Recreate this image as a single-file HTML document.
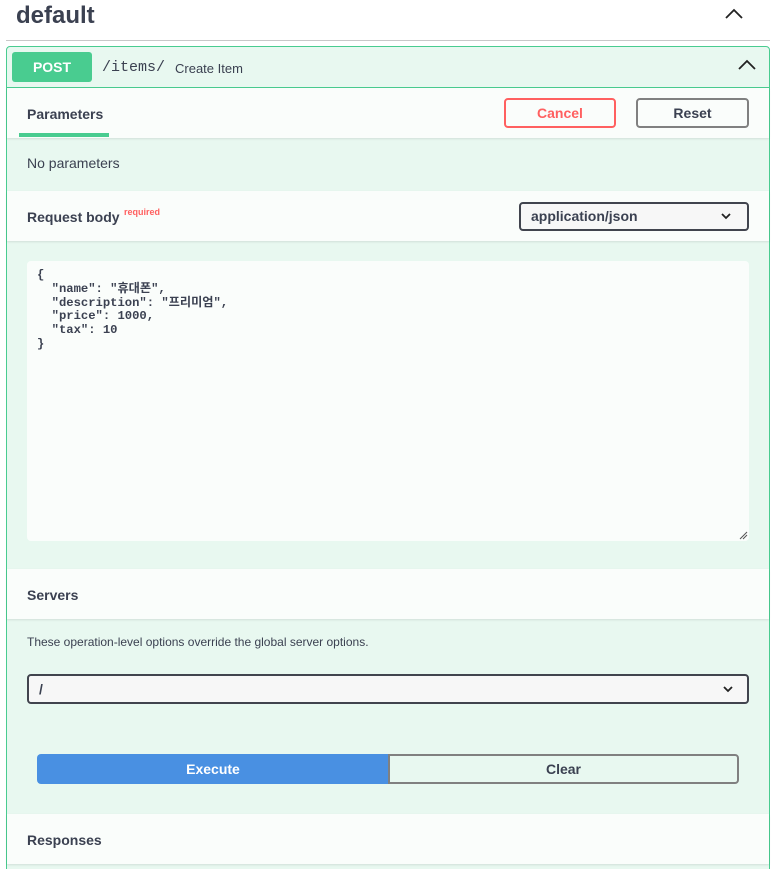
<!DOCTYPE html>
<html style="width:782px;height:869px;overflow:hidden"><head><meta charset="utf-8"><style>
*{box-sizing:border-box;margin:0;padding:0}
body{width:782px;height:869px;background:#fff;font-family:"Liberation Sans","Noto Sans CJK KR",sans-serif;color:#3b4151;position:relative;overflow:hidden}
.a{position:absolute}
.t{font-size:14px;font-weight:bold;color:#3b4151}
</style></head><body>
<div class="a" style="left:16px;top:2px;font-size:24px;font-weight:bold;color:#3b4151">default</div>
<svg class="a" style="left:724px;top:7px" width="20" height="14"><path d="M2 11 L10 3 L18 11" fill="none" stroke="#222" stroke-width="1.8"/></svg>
<div class="a" style="left:6px;top:40px;width:764px;height:1px;background:#c8c8c8"></div>

<div class="a" style="left:6px;top:46px;width:764px;height:840px;border:1px solid #49cc90;border-radius:4px;background:#e8f8f0"></div>
<div class="a" style="left:7px;top:87px;width:762px;height:1px;background:#49cc90"></div>
<div class="a" style="left:12px;top:52px;width:80px;height:30px;background:#49cc90;border-radius:3px;color:#fff;font-weight:bold;font-size:14px;text-align:center;line-height:30px">POST</div>
<div class="a" style="left:102px;top:59px;font-family:'Liberation Mono',monospace;font-size:15px;color:#3b4151">/items/</div>
<div class="a" style="left:175px;top:61px;font-size:13px;color:#3b4151">Create Item</div>
<svg class="a" style="left:737px;top:58px" width="20" height="14"><path d="M2 11 L10 3 L18 11" fill="none" stroke="#222" stroke-width="1.8"/></svg>

<div class="a" style="left:7px;top:88px;width:762px;height:50px;background:#fafdfb;box-shadow:0 1px 2px rgba(0,0,0,.1)"></div>
<div class="a t" style="left:27px;top:106px">Parameters</div>
<div class="a" style="left:19px;top:133px;width:90px;height:4px;background:#49cc90"></div>
<div class="a" style="left:504px;top:98px;width:112px;height:30px;border:2px solid #ff6060;border-radius:4px;color:#ff6060;font-size:14px;font-weight:bold;text-align:center;line-height:26px">Cancel</div>
<div class="a" style="left:636px;top:98px;width:113px;height:30px;border:2px solid #808080;border-radius:4px;color:#3b4151;font-size:14px;font-weight:bold;text-align:center;line-height:26px">Reset</div>
<div class="a" style="left:27px;top:155px;font-size:14px">No parameters</div>

<div class="a" style="left:7px;top:191px;width:762px;height:50px;background:#fafdfb;box-shadow:0 1px 2px rgba(0,0,0,.1)"></div>
<div class="a t" style="left:27px;top:209px">Request body</div>
<div class="a" style="left:124px;top:207px;font-size:9px;color:#ff6060;font-weight:bold">required</div>
<div class="a" style="left:519px;top:202px;width:230px;height:29px;border:2px solid #41444e;border-radius:4px;background:#f7f7f7;font-size:14px;font-weight:bold;padding-left:10px;line-height:25px">application/json</div>
<svg class="a" style="left:720px;top:212px" width="12" height="8"><path d="M2 2 L6 6 L10 2" fill="none" stroke="#222" stroke-width="1.8"/></svg>

<div class="a" style="left:27px;top:261px;width:722px;height:280px;background:#fafdfb;border-radius:4px"></div>
<pre class="a" style="left:37px;top:269px;font-family:'Liberation Mono','Noto Sans CJK KR',monospace;font-size:12.2px;line-height:13.8px;font-weight:bold;color:#3b4151">{
  "name": "휴대폰",
  "description": "프리미엄",
  "price": 1000,
  "tax": 10
}</pre>
<svg class="a" style="left:739px;top:531px" width="9" height="9"><path d="M1 8 L8 1 M4 8 L8 4" stroke="#555" stroke-width="1"/></svg>

<div class="a" style="left:7px;top:569px;width:762px;height:50px;background:#fafdfb;box-shadow:0 1px 2px rgba(0,0,0,.1)"></div>
<div class="a t" style="left:27px;top:587px">Servers</div>
<div class="a" style="left:27px;top:635px;font-size:12px">These operation-level options override the global server options.</div>
<div class="a" style="left:27px;top:674px;width:722px;height:30px;border:2px solid #41444e;border-radius:4px;background:#f7f7f7;font-size:14px;font-weight:bold;padding-left:10px;line-height:26px">/</div>
<svg class="a" style="left:722px;top:685px" width="12" height="8"><path d="M2 2 L6 6 L10 2" fill="none" stroke="#222" stroke-width="1.8"/></svg>

<div class="a" style="left:37px;top:754px;width:352px;height:30px;background:#4990e2;border-radius:4px 0 0 4px;color:#fff;font-size:14px;font-weight:bold;text-align:center;line-height:30px">Execute</div>
<div class="a" style="left:388px;top:754px;width:351px;height:30px;border:2px solid #808080;border-radius:0 4px 4px 0;color:#3b4151;font-size:14px;font-weight:bold;text-align:center;line-height:26px">Clear</div>

<div class="a" style="left:7px;top:814px;width:762px;height:50px;background:#fafdfb;box-shadow:0 1px 2px rgba(0,0,0,.1)"></div>
<div class="a t" style="left:27px;top:832px">Responses</div>
</body></html>
